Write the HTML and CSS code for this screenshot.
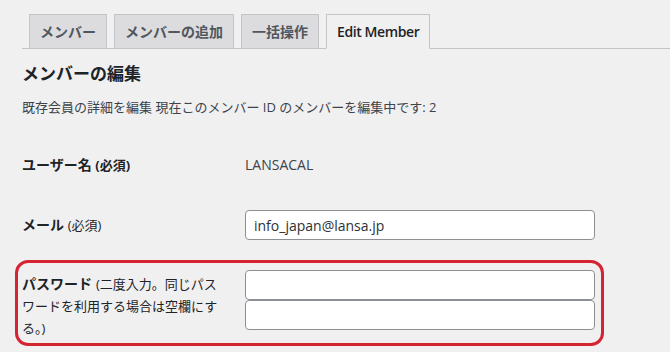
FILE: index.html
```html
<!DOCTYPE html>
<html lang="ja">
<head>
  <meta charset="UTF-8">
  <title>メンバーの編集</title>
  <link rel="stylesheet" href="styles.css">
</head>
<body>
  <div class="wrap">
    <!-- タブ -->
    <nav class="nav-tabs">
      <a class="nav-tab">メンバー</a>
      <a class="nav-tab">メンバーの追加</a>
      <a class="nav-tab">一括操作</a>
      <a class="nav-tab active">Edit Member</a>
    </nav>

    <h2 class="page-title">メンバーの編集</h2>
    <p class="desc">既存会員の詳細を編集 現在このメンバー ID のメンバーを編集中です: 2</p>

    <!-- フォーム -->
    <div class="form-row row-user">
      <div class="label">ユーザー名 <span class="req bold">(必須)</span></div>
      <div class="value">LANSACAL</div>
    </div>

    <div class="form-row row-mail">
      <div class="label">メール <span class="req">(必須)</span></div>
      <div class="field"><input type="text" value="info_japan@lansa.jp"></div>
    </div>

    <div class="form-row row-pass">
      <div class="label"><span class="main">パスワード</span><span class="req gap">(二度入力。同じパスワードを利用する場合は空欄にする。)</span></div>
      <div class="field">
        <input type="password">
        <input type="password">
      </div>
    </div>
  </div>
</body>
</html>
```

FILE: styles.css
```css
* {
  box-sizing: border-box;
}
body {
  margin: 0;
  background-color: #f0f0f1;
  color: #1d2327;
  font-family: "Open Sans", "Noto Sans CJK JP", sans-serif;
  font-size: 13px;
  line-height: 20px;
}
.wrap {
  padding: 14px 0 0 22px;
}
/* --- タブ --- */
.nav-tabs {
  display: flex;
  gap: 7px;
  padding-left: 7px;
  border-bottom: 1px solid #c3c4c7;
}
.nav-tab {
  height: 35px;
  margin-bottom: -1px;
  padding: 0 10px;
  line-height: 34px;
  font-size: 14px;
  font-weight: 600;
  color: #50575e;
  background-color: #dcdcde;
  border: 1px solid #c3c4c7;
}
.nav-tab.active {
  color: #1d2327;
  background-color: #f0f0f1;
  border-bottom-color: #f0f0f1;
  letter-spacing: -0.4px;
}
.page-title {
  margin: 14px 0 0;
  font-size: 17px;
  line-height: 22px;
  font-weight: 700;
}
.desc {
  margin: 12px 0 0;
  color: #3c434a;
}
/* --- フォーム --- */
.form-row {
  display: grid;
  grid-template-columns: 223px 350px;
  align-items: center;
}
.label {
  width: 200px;
  font-size: 14px;
  font-weight: 700;
  line-height: 21px;
}
.req {
  font-size: 13px;
  font-weight: 400;
}
.req.bold {
  font-weight: 700;
}
.req.gap {
  margin-left: 4px;
}
.value {
  font-size: 14px;
  color: #3c434a;
}
.row-user {
  margin-top: 37px;
}
.row-mail {
  margin-top: 34px;
}
.field input {
  display: block;
  width: 100%;
  height: 30px;
  padding: 0 8px;
  border: 1px solid #8c8f94;
  border-radius: 4px;
  background-color: #fff;
  color: #2c3338;
  font-family: inherit;
  font-size: 14px;
}
.row-pass {
  align-items: start;
  width: 589px;
  margin: 20px 0 0 -7px;
  padding: 7px 6px 4px 4px;
  border: 3px solid #d42331;
  border-radius: 13px;
}
.row-pass .label {
  padding-top: 3px;
}
```
